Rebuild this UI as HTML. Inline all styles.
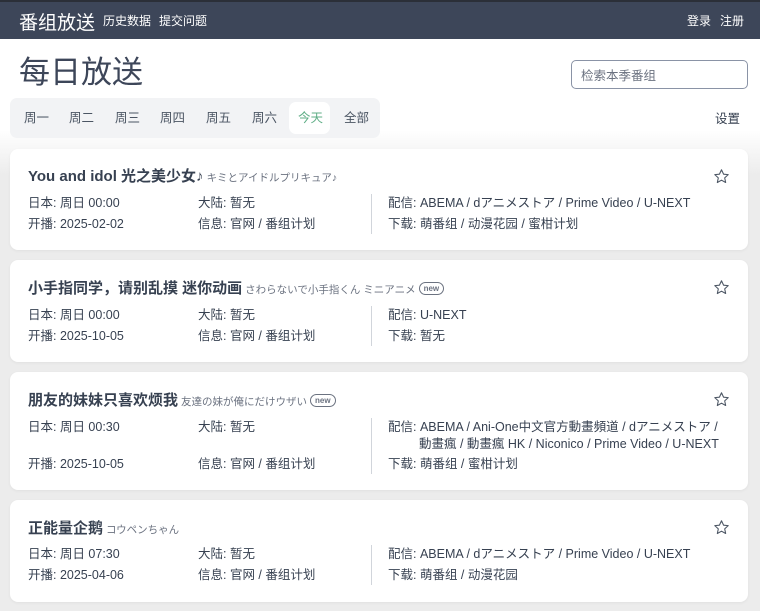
<!DOCTYPE html>
<html><head><meta charset="utf-8"><style>
*{margin:0;padding:0;box-sizing:border-box}
body{width:760px;height:611px;overflow:hidden;font-family:"Liberation Sans","Noto Sans CJK SC",sans-serif;background:linear-gradient(#fff 0,#fff 130px,#ececec 175px,#ececec);color:#374151;position:relative}
.nav{height:39px;background:#3d4659;color:#fff;position:relative;border-top:2px solid #2b2f38}
.nav .logo{position:absolute;left:19px;top:6px;font-size:19px}
.nav .l{position:absolute;top:10px;font-size:12px}
h1{position:absolute;left:19px;top:47px;font-size:31px;font-weight:400;color:#3d4659}
.search{position:absolute;left:571px;top:60px;width:177px;height:29px;border:1px solid #8a93a6;border-radius:5px;background:#fff;font-size:12.5px;color:#6b7280;padding:4px 9px}
.tabs{position:absolute;left:10px;top:98px;width:370px;height:40px;background:#f2f3f5;border-radius:7px}
.tab{position:absolute;top:9px;font-size:12.5px;color:#4b5563}
.today{position:absolute;left:279px;top:4px;width:41px;height:32px;background:#fff;border-radius:7px}
.set{position:absolute;left:715px;top:108px;font-size:12.5px;color:#374151}
.card{position:absolute;left:10px;width:738px;background:#fff;border-radius:8px;box-shadow:0 1px 3px rgba(0,0,0,.05)}
.t{position:absolute;left:18px;font-size:15px;font-weight:700;color:#374151;white-space:nowrap}
.t small{font-size:10.5px;font-weight:400;color:#6b7280;margin-left:3px}
.new{display:inline-block;font-size:8px;border:1px solid #6b7280;border-radius:8px;padding:0 4px;line-height:11px;margin-left:3px;vertical-align:2px;color:#6b7280}
.r{position:absolute;font-size:12.5px;color:#374151;white-space:nowrap;line-height:17px}
.vl{position:absolute;left:361px;width:1px;background:#d1d5db}
.star{position:absolute;left:703px;width:17px;height:17px}
</style></head><body>
<div class="nav"><span class="logo">番组放送</span><span class="l" style="left:103px">历史数据</span><span class="l" style="left:159px">提交问题</span><span class="l" style="left:687px">登录</span><span class="l" style="left:720px">注册</span></div>
<h1>每日放送</h1>
<div class="search">检索本季番组</div>
<div class="tabs"><div class="today"></div>
<span class="tab" style="left:14px">周一</span><span class="tab" style="left:59px">周二</span><span class="tab" style="left:105px">周三</span><span class="tab" style="left:150px">周四</span><span class="tab" style="left:196px">周五</span><span class="tab" style="left:242px">周六</span><span class="tab" style="left:288px;color:#5fae86">今天</span><span class="tab" style="left:334px">全部</span></div>
<div class="set">设置</div>

<div class="card" style="top:149px;height:101px">
<div class="t" style="top:16px">You and idol 光之美少女♪<small>キミとアイドルプリキュア♪</small></div>
<svg class="star" style="top:19px" viewBox="0 0 24 24"><path d="M12 2.5l2.9 6.2 6.6.7-5 4.5 1.4 6.6L12 17.2l-5.9 3.3 1.4-6.6-5-4.5 6.6-.7z" fill="none" stroke="#4b5563" stroke-width="1.5" stroke-linejoin="round"/></svg>
<div class="r" style="left:18px;top:46px">日本: 周日 00:00</div><div class="r" style="left:188px;top:46px">大陆: 暂无</div><div class="r" style="left:378px;top:46px">配信: ABEMA / dアニメストア / Prime Video / U-NEXT</div>
<div class="r" style="left:18px;top:67px">开播: 2025-02-02</div><div class="r" style="left:188px;top:67px">信息: 官网 / 番组计划</div><div class="r" style="left:378px;top:67px">下载: 萌番组 / 动漫花园 / 蜜柑计划</div>
<div class="vl" style="top:45px;height:40px"></div></div>

<div class="card" style="top:260px;height:102px">
<div class="t" style="top:17px">小手指同学，请别乱摸 迷你动画<small>さわらないで小手指くん ミニアニメ</small><span class="new">new</span></div>
<svg class="star" style="top:19px" viewBox="0 0 24 24"><path d="M12 2.5l2.9 6.2 6.6.7-5 4.5 1.4 6.6L12 17.2l-5.9 3.3 1.4-6.6-5-4.5 6.6-.7z" fill="none" stroke="#4b5563" stroke-width="1.5" stroke-linejoin="round"/></svg>
<div class="r" style="left:18px;top:47px">日本: 周日 00:00</div><div class="r" style="left:188px;top:47px">大陆: 暂无</div><div class="r" style="left:378px;top:47px">配信: U-NEXT</div>
<div class="r" style="left:18px;top:68px">开播: 2025-10-05</div><div class="r" style="left:188px;top:68px">信息: 官网 / 番组计划</div><div class="r" style="left:378px;top:68px">下载: 暂无</div>
<div class="vl" style="top:46px;height:40px"></div></div>

<div class="card" style="top:372px;height:118px">
<div class="t" style="top:17px">朋友的妹妹只喜欢烦我<small>友達の妹が俺にだけウザい</small><span class="new">new</span></div>
<svg class="star" style="top:19px" viewBox="0 0 24 24"><path d="M12 2.5l2.9 6.2 6.6.7-5 4.5 1.4 6.6L12 17.2l-5.9 3.3 1.4-6.6-5-4.5 6.6-.7z" fill="none" stroke="#4b5563" stroke-width="1.5" stroke-linejoin="round"/></svg>
<div class="r" style="left:18px;top:47px">日本: 周日 00:30</div><div class="r" style="left:188px;top:47px">大陆: 暂无</div><div class="r" style="left:378px;top:47px">配信: ABEMA / Ani-One中文官方動畫頻道 / dアニメストア /<br><span style="padding-left:31px">動畫瘋 / 動畫瘋 HK / Niconico / Prime Video / U-NEXT</span></div>
<div class="r" style="left:18px;top:84px">开播: 2025-10-05</div><div class="r" style="left:188px;top:84px">信息: 官网 / 番组计划</div><div class="r" style="left:378px;top:84px">下载: 萌番组 / 蜜柑计划</div>
<div class="vl" style="top:46px;height:56px"></div></div>

<div class="card" style="top:500px;height:102px">
<div class="t" style="top:17px">正能量企鹅<small>コウペンちゃん</small></div>
<svg class="star" style="top:19px" viewBox="0 0 24 24"><path d="M12 2.5l2.9 6.2 6.6.7-5 4.5 1.4 6.6L12 17.2l-5.9 3.3 1.4-6.6-5-4.5 6.6-.7z" fill="none" stroke="#4b5563" stroke-width="1.5" stroke-linejoin="round"/></svg>
<div class="r" style="left:18px;top:46px">日本: 周日 07:30</div><div class="r" style="left:188px;top:46px">大陆: 暂无</div><div class="r" style="left:378px;top:46px">配信: ABEMA / dアニメストア / Prime Video / U-NEXT</div>
<div class="r" style="left:18px;top:67px">开播: 2025-04-06</div><div class="r" style="left:188px;top:67px">信息: 官网 / 番组计划</div><div class="r" style="left:378px;top:67px">下载: 萌番组 / 动漫花园</div>
<div class="vl" style="top:45px;height:40px"></div></div>
</body></html>
